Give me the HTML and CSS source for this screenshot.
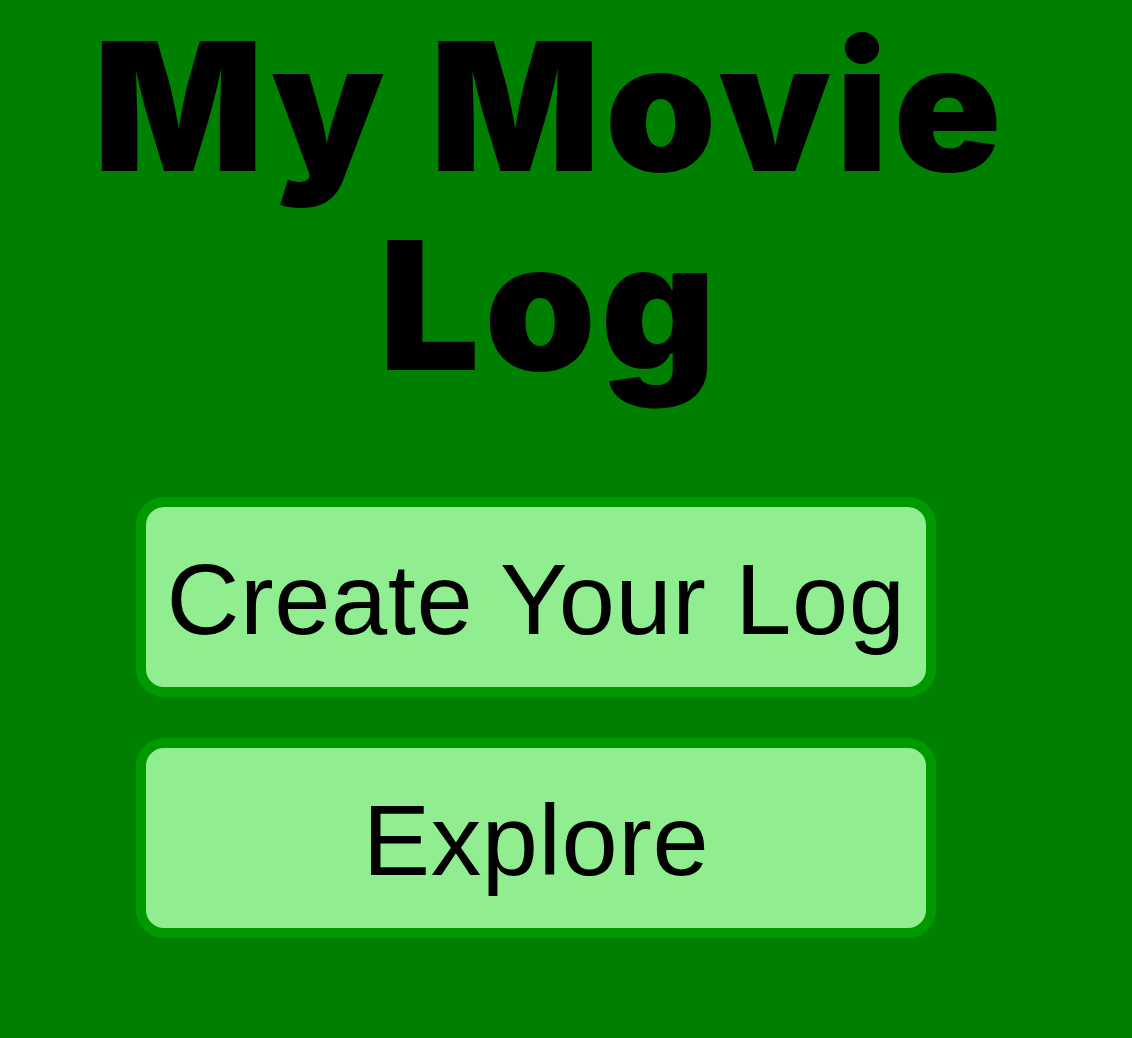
FILE: index.html
```html
<!DOCTYPE html>
<html lang="en">
<head>
<meta charset="utf-8">
<title>My Movie Log</title>
<link rel="stylesheet" href="styles.css">
</head>
<body>
<main class="page">
  <h1 class="title">My Movie Log</h1>
  <div class="actions">
    <button class="btn" type="button">Create Your Log</button>
    <button class="btn" type="button">Explore</button>
  </div>
</main>
</body>
</html>
```
FILE: styles.css
```css
html, body {
  margin: 0;
  padding: 0;
  background: #008000;
}
body {
  font-family: "Liberation Sans", Arial, sans-serif;
  color: #000;
}
.page {
  width: 1100px;
  padding-top: 7px;
}
.title {
  margin: 0;
  font-family: Inter, "Liberation Sans", sans-serif;
  font-weight: 900;
  font-size: 178px;
  line-height: 199px;
  letter-spacing: 5px;
  text-align: center;
}
.actions {
  display: flex;
  flex-direction: column;
  gap: 41px;
  margin-top: 92px;
  padding-left: 136px;
}
.btn {
  box-sizing: border-box;
  width: 800px;
  margin: 0;
  padding: 34px 0 30px;
  border: 10px solid #009900;
  border-radius: 28px;
  background: #90ee90;
  font-family: "Liberation Sans", Arial, sans-serif;
  font-size: 101px;
  line-height: 116px;
  letter-spacing: 0.6px;
  color: #000;
  text-align: center;
  cursor: pointer;
}
```
